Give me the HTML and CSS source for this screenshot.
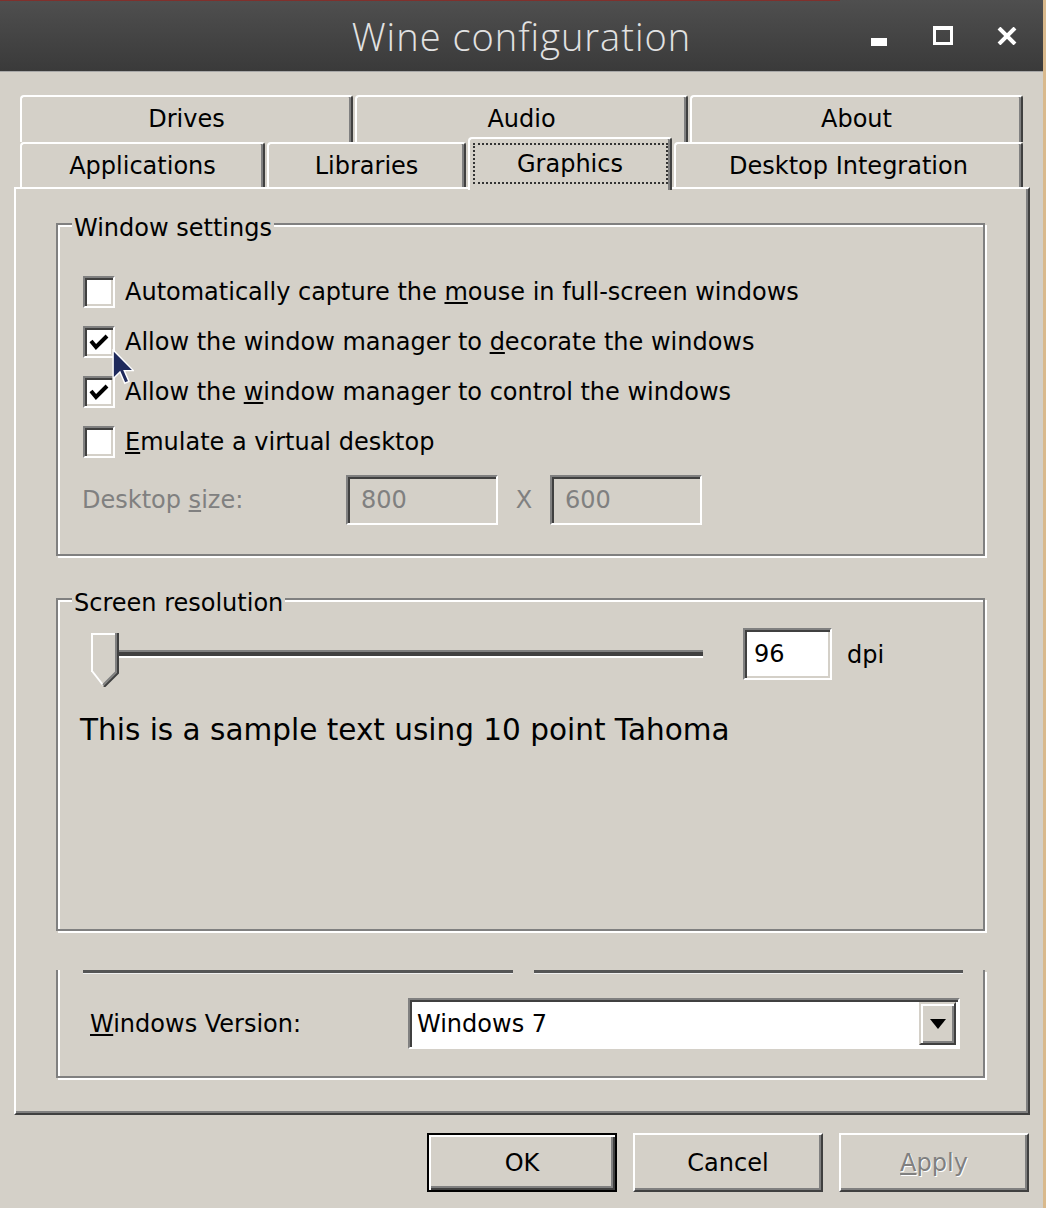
FILE: index.html
```html
<!DOCTYPE html>
<html lang="en">
  <head>
    <meta charset="UTF-8" />
    <title>Wine configuration</title>
    <link rel="stylesheet" href="styles.css">
  </head>
  <body>
    <div class="window">
      <div class="titlebar">
        <span></span>
        <h1 class="title">Wine configuration</h1>
        <div class="controls">
          <span class="ctl-min"></span>
          <span class="ctl-max"></span>
          <svg class="ctl-close" width="20" height="18" viewBox="0 0 20 18">
            <path d="M2 1 L18 17 M18 1 L2 17" stroke="#fff" stroke-width="4" />
          </svg>
        </div>
      </div>

      <div class="content">
        <div class="tabs">
          <div class="tab-row tab-row-back">
            <div class="tab">Drives</div>
            <div class="tab">Audio</div>
            <div class="tab">About</div>
          </div>
          <div class="tab-row tab-row-front">
            <div class="tab tab-apps">Applications</div>
            <div class="tab tab-libs">Libraries</div>
            <div class="tab tab-graphics active"><span class="focus">Graphics</span></div>
            <div class="tab tab-desktop">Desktop Integration</div>
          </div>
        </div>

        <div class="panel">
          <div class="group group-window">
            <span class="group-title">Window settings</span>
            <div class="check">
              <span class="box"></span>
              <span>Automatically capture the <u>m</u>ouse in full-screen windows</span>
            </div>
            <div class="check">
              <span class="box">
                <svg width="28" height="28" viewBox="0 0 28 28"><path d="M6 13 L11 19 L22 8" fill="none" stroke="#000" stroke-width="4" /></svg>
              </span>
              <span>Allow the window manager to <u>d</u>ecorate the windows</span>
            </div>
            <div class="check">
              <span class="box">
                <svg width="28" height="28" viewBox="0 0 28 28"><path d="M6 13 L11 19 L22 8" fill="none" stroke="#000" stroke-width="4" /></svg>
              </span>
              <span>Allow the <u>w</u>indow manager to control the windows</span>
            </div>
            <div class="check">
              <span class="box"></span>
              <span><u>E</u>mulate a virtual desktop</span>
            </div>
            <div class="desktop-size">
              <span class="size-label">Desktop <u>s</u>ize:</span>
              <span class="field field-disabled">800</span>
              <span class="size-x">X</span>
              <span class="field field-disabled">600</span>
            </div>
          </div>

          <div class="group group-screen">
            <span class="group-title">Screen resolution</span>
            <div class="dpi-row">
              <div class="slider">
                <svg class="thumb" width="28" height="54" viewBox="0 0 28 54">
                  <path d="M1 39 L1 1 L25 1" fill="none" stroke="#fff" stroke-width="2" />
                  <path d="M1 38 L12 52" fill="none" stroke="#fff" stroke-width="2" />
                  <path d="M25 0 L25 39 L12 52" fill="none" stroke="#808080" stroke-width="2" />
                  <path d="M27 0 L27 40 L13 54" fill="none" stroke="#404040" stroke-width="2" />
                </svg>
                <span class="track"></span>
              </div>
              <span class="field field-dpi">96</span>
              <span class="dpi">dpi</span>
            </div>
            <p class="sample">This is a sample text using 10 point Tahoma</p>
          </div>

          <div class="group group-version">
            <div class="separator"><span></span><span></span></div>
            <div class="version-row">
              <span class="version-label"><u>W</u>indows Version:</span>
              <div class="combo">
                <span class="combo-value">Windows 7</span>
                <span class="combo-btn">
                  <svg width="16" height="10" viewBox="0 0 16 10"><path d="M0 0 L16 0 L8 10 Z" fill="#000" /></svg>
                </span>
              </div>
            </div>
          </div>
        </div>

        <div class="buttons">
          <button class="btn btn-default">OK</button>
          <button class="btn">Cancel</button>
          <button class="btn btn-disabled" disabled><u>A</u>pply</button>
        </div>
      </div>

      <svg class="cursor" width="22" height="36" viewBox="0 0 12 20">
        <path d="M0.5 0.5 L0.5 16.5 L4.3 12.8 L7 19 L9.3 18 L6.7 12 L11.8 12 Z" fill="#1f2a5c" stroke="#fff" stroke-width="0.8" />
      </svg>
    </div>
  </body>
</html>
```

FILE: styles.css
```css
body {
  margin: 0;
  background-color: #d9b98c;
  font-family: "DejaVu Sans", Verdana, sans-serif;
  font-size: 24px;
  color: #000;
}

.window {
  position: relative;
  width: 1043px;
  min-height: 1208px;
  background-color: #d4d0c8;
}

/* title bar */

.titlebar {
  display: grid;
  grid-template-columns: 1fr auto 1fr;
  align-items: center;
  height: 71px;
  border-bottom: 1px solid #a8a8a8;
  background: linear-gradient(to right, #80302c 0, #80302c 840px, transparent 840px) top / 100% 1px no-repeat,
    linear-gradient(#4f4f4f, #3a3a3a);
}

.title {
  margin: 0;
  font-family: "Open Sans", Roboto, sans-serif;
  font-weight: 300;
  font-size: 38px;
  letter-spacing: 1px;
  color: #e2e2e2;
}

.controls {
  justify-self: end;
  align-self: start;
  display: flex;
  align-items: flex-start;
  padding: 26px 26px 0 0;
}

.ctl-min {
  width: 16px;
  height: 8px;
  margin-top: 12px;
  background-color: #fff;
}

.ctl-max {
  width: 20px;
  height: 19px;
  margin-left: 46px;
  box-sizing: border-box;
  border: 3px solid #fff;
  border-top-width: 4px;
}

.ctl-close {
  margin: 1px 0 0 44px;
}

/* tabs */

.content {
  padding: 23px 13px 0 14px;
}

.tabs {
  margin: 0 7px 0 6px;
}

.tab-row {
  display: flex;
  gap: 2px;
}

.tab {
  display: flex;
  align-items: center;
  justify-content: center;
  box-sizing: border-box;
  border-top: 2px solid #fff;
  border-left: 2px solid #fff;
  border-right: 2px solid #404040;
  border-radius: 4px 3px 0 0;
  box-shadow: inset -2px 0 0 #808080;
  background-color: #d4d0c8;
}

.tab-row-back {
  height: 47px;
}

.tab-row-back .tab {
  flex: 1;
  padding-bottom: 2px;
}

.tab-row-front {
  height: 45px;
}

.tab-apps {
  flex: 0 0 245px;
}

.tab-libs {
  flex: 0 0 199px;
}

.tab-graphics {
  flex: 0 0 204px;
}

.tab-desktop {
  flex: 1;
}

.tab.active {
  position: relative;
  z-index: 1;
  margin: -5px 0 -3px;
  padding-bottom: 2px;
}

.focus {
  display: flex;
  align-items: center;
  justify-content: center;
  width: 195px;
  height: 41px;
  box-sizing: border-box;
  border: 2px dotted #333;
}

/* tab page */

.panel {
  height: 928px;
  box-sizing: border-box;
  padding: 34px 43px 0 40px;
  border: 2px solid;
  border-color: #fff #404040 #404040 #fff;
  box-shadow: inset -2px -2px 0 #808080;
}

.group {
  display: flex;
  flex-direction: column;
  box-sizing: border-box;
  border: 2px solid #808080;
  box-shadow: inset 2px 2px 0 #fff, 2px 2px 0 #fff;
}

.group-title {
  align-self: flex-start;
  margin: -12px 0 0 14px;
  padding: 0 2px;
  line-height: 30px;
  background-color: #d4d0c8;
}

.group-window {
  height: 333px;
}

.check {
  display: flex;
  align-items: center;
  gap: 10px;
  height: 50px;
  padding-left: 25px;
}

.check:first-of-type {
  margin-top: 24px;
}

.box {
  display: flex;
  width: 32px;
  height: 32px;
  box-sizing: border-box;
  border: 2px solid;
  border-color: #808080 #fff #fff #808080;
  box-shadow: inset 2px 2px 0 #404040, inset -2px -2px 0 #d4d0c8;
  background-color: #fff;
}

.desktop-size {
  display: flex;
  align-items: center;
  margin-top: 8px;
  padding-left: 24px;
  color: #808080;
}

.size-label {
  width: 264px;
}

.size-x {
  width: 52px;
  text-align: center;
}

.field {
  display: flex;
  align-items: center;
  box-sizing: border-box;
  border: 2px solid;
  border-color: #808080 #fff #fff #808080;
  box-shadow: inset 2px 2px 0 #404040, inset -2px -2px 0 #d4d0c8;
}

.field-disabled {
  width: 152px;
  height: 50px;
  padding-left: 13px;
  color: #808080;
}

.group-screen {
  height: 333px;
  margin-top: 42px;
}

.dpi-row {
  display: flex;
  align-items: flex-start;
  margin-top: 10px;
  padding-left: 33px;
}

.slider {
  display: flex;
  align-items: flex-start;
  width: 612px;
  height: 58px;
}

.thumb {
  margin-top: 5px;
  flex: none;
}

.track {
  flex: 1;
  height: 4px;
  margin-top: 22px;
  border-top: 2px solid #808080;
  border-bottom: 2px solid #fff;
  background-color: #404040;
}

.field-dpi {
  width: 89px;
  height: 52px;
  margin-left: 40px;
  padding-left: 9px;
  background-color: #fff;
}

.dpi {
  margin: 13px 0 0 15px;
}

.sample {
  margin: 24px 0 0 22px;
  font-size: 29.5px;
  line-height: 40px;
}

.group-version {
  height: 108px;
  margin-top: 39px;
  border-top: none;
  box-shadow: inset 2px 0 0 #fff, 2px 2px 0 #fff;
}

.separator {
  display: flex;
  gap: 21px;
  padding: 0 20px 0 25px;
}

.separator span {
  flex: 1;
  height: 3px;
  border-bottom: 1px solid #eee;
  background-color: #555;
}

.version-row {
  display: flex;
  align-items: center;
  margin-top: 24px;
  padding-left: 32px;
}

.version-label {
  width: 318px;
}

.combo {
  display: flex;
  width: 552px;
  height: 51px;
  box-sizing: border-box;
  padding: 2px;
  border: 2px solid;
  border-color: #808080 #fff #fff #808080;
  box-shadow: inset 2px 2px 0 #404040;
  background-color: #fff;
}

.combo-value {
  flex: 1;
  display: flex;
  align-items: center;
  padding-left: 5px;
}

.combo-btn {
  display: flex;
  align-items: center;
  justify-content: center;
  width: 37px;
  box-sizing: border-box;
  border: 2px solid;
  border-color: #d4d0c8 #404040 #404040 #d4d0c8;
  box-shadow: inset 2px 2px 0 #fff, inset -2px -2px 0 #808080;
  background-color: #d4d0c8;
}

/* dialog buttons */

.buttons {
  display: flex;
  justify-content: flex-end;
  gap: 16px;
  padding: 18px 1px 0 0;
}

.btn {
  width: 190px;
  height: 59px;
  padding: 0;
  font-family: inherit;
  font-size: 24px;
  color: #000;
  background-color: #d4d0c8;
  border: 2px solid;
  border-color: #fff #404040 #404040 #fff;
  box-shadow: inset -2px -2px 0 #808080;
}

.btn-default {
  border-color: #000;
  box-shadow: inset 2px 2px 0 #fff, inset -2px -2px 0 #404040, inset -4px -4px 0 #808080;
}

.btn-disabled {
  color: #808080;
  text-shadow: 1px 1px 0 #fff;
}

.cursor {
  position: absolute;
  left: 112px;
  top: 349px;
}
```
